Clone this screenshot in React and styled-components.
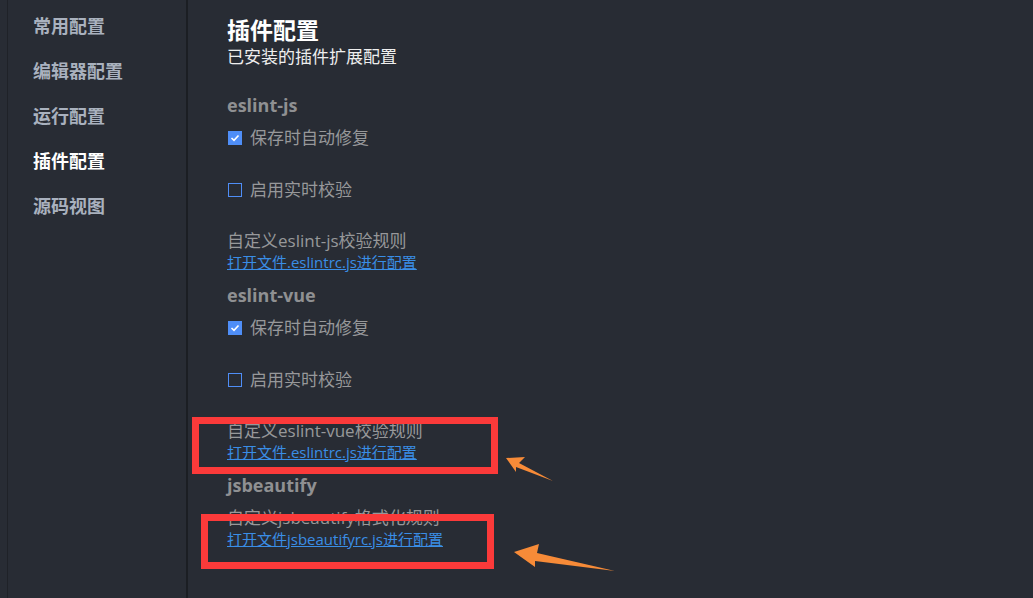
import React from "react";
import styled, { createGlobalStyle } from "styled-components";

const Global = createGlobalStyle`
  html, body {
    margin: 0;
    padding: 0;
    background: #282c34;
    height: 100%;
  }
  #root { height: 100%; }
  * { box-sizing: border-box; }
`;

const Page = styled.div`
  position: relative;
  display: flex;
  height: 598px;
  overflow: hidden;
  background: #282c34;
  font-family: "Open Sans", "Noto Sans CJK SC", sans-serif;
  border-left: 1px solid #1f2228;
  margin-left: 7px;
`;

const Sidebar = styled.nav`
  width: 180px;
  flex: none;
  padding-top: 3px;
  border-right: 2px solid #1b1e23;
  display: flex;
  flex-direction: column;
`;

const NavItem = styled.div`
  padding-left: 25px;
  height: 45px;
  line-height: 45px;
  font-size: 18px;
  font-weight: 700;
  color: ${(p) => (p.$active ? "#ffffff" : "#a9b1be")};
  font-family: "Noto Sans CJK SC", sans-serif;
`;

const Content = styled.main`
  flex: 1;
  padding: 14px 0 0 39px;
  display: flex;
  flex-direction: column;
`;

const Title = styled.h1`
  margin: 0;
  font-size: 23px;
  line-height: 30px;
  font-weight: 700;
  color: #ffffff;
  font-family: "Noto Sans CJK SC", sans-serif;
`;

const Subtitle = styled.div`
  font-size: 17px;
  line-height: 24px;
  color: #eeeeee;
  font-family: "Noto Sans CJK SC", sans-serif;
  margin-bottom: 25px;
`;

const Section = styled.section`
  display: flex;
  flex-direction: column;
  margin-bottom: 12px;
`;

const SectionTitle = styled.h2`
  margin: 0;
  font-size: 18px;
  line-height: 24px;
  font-weight: 700;
  color: #8f9092;
`;

const CheckRow = styled.label`
  display: flex;
  align-items: center;
  gap: 8px;
  height: 51.5px;
  padding: 9px 0 18.5px 1px;
  font-size: 17px;
  line-height: 24px;
  color: #97989a;
`;

const Box = styled.span`
  width: 14px;
  height: 14px;
  flex: none;
  display: inline-flex;
  align-items: center;
  justify-content: center;
  border: 1.5px solid #4f8ef7;
  background: ${(p) => (p.$checked ? "#4f8ef7" : "transparent")};
`;

const Custom = styled.div`
  padding-top: 9px;
  display: flex;
  flex-direction: column;
`;

const CustomText = styled.div`
  font-size: 17px;
  line-height: 24px;
  color: #97989a;
`;

const Link = styled.a`
  font-size: 15px;
  line-height: 18px;
  color: #3a8ee6;
  text-decoration: underline;
  cursor: pointer;
`;

const Highlight = styled.div`
  position: absolute;
  border: 7px solid #fb3a3a;
  pointer-events: none;
`;

const Overlay = styled.svg`
  position: absolute;
  left: -8px;
  top: 0;
  width: 1033px;
  height: 598px;
  pointer-events: none;
`;

function Check({ checked }) {
  return (
    <Box $checked={checked}>
      {checked && (
        <svg width="10" height="8" viewBox="0 0 10 8">
          <path d="M1.5 4 L4 6.3 L8.5 1.5" fill="none" stroke="#fff" strokeWidth="1.6" />
        </svg>
      )}
    </Box>
  );
}

const nav = ["常用配置", "编辑器配置", "运行配置", "插件配置", "源码视图"];

const plugins = [
  {
    name: "eslint-js",
    checks: true,
    custom: "自定义eslint-js校验规则",
    link: "打开文件.eslintrc.js进行配置",
  },
  {
    name: "eslint-vue",
    checks: true,
    custom: "自定义eslint-vue校验规则",
    link: "打开文件.eslintrc.js进行配置",
  },
  {
    name: "jsbeautify",
    checks: false,
    custom: "自定义jsbeautify格式化规则",
    link: "打开文件jsbeautifyrc.js进行配置",
  },
];

export default function App() {
  return (
    <>
      <Global />
      <Page>
        <Sidebar>
          {nav.map((n) => (
            <NavItem key={n} $active={n === "插件配置"}>
              {n}
            </NavItem>
          ))}
        </Sidebar>
        <Content>
          <Title>插件配置</Title>
          <Subtitle>已安装的插件扩展配置</Subtitle>
          {plugins.map((p) => (
            <Section key={p.name}>
              <SectionTitle>{p.name}</SectionTitle>
              {p.checks && (
                <>
                  <CheckRow>
                    <Check checked />
                    保存时自动修复
                  </CheckRow>
                  <CheckRow>
                    <Check />
                    启用实时校验
                  </CheckRow>
                </>
              )}
              <Custom>
                <CustomText>{p.custom}</CustomText>
                <Link>{p.link}</Link>
              </Custom>
            </Section>
          ))}
        </Content>
        <Highlight style={{ left: 184, top: 417, width: 306, height: 57 }} />
        <Highlight style={{ left: 193, top: 514, width: 293, height: 55 }} />
        <Overlay viewBox="0 0 1033 598">
          <polygon
            points="506,458 525,457 519,463 553,481 516,467 516,472"
            fill="#f78b38"
          />
          <polygon
            points="514,552 539,544 537,553 615,571 535,561 535,567"
            fill="#f78b38"
          />
        </Overlay>
      </Page>
    </>
  );
}
